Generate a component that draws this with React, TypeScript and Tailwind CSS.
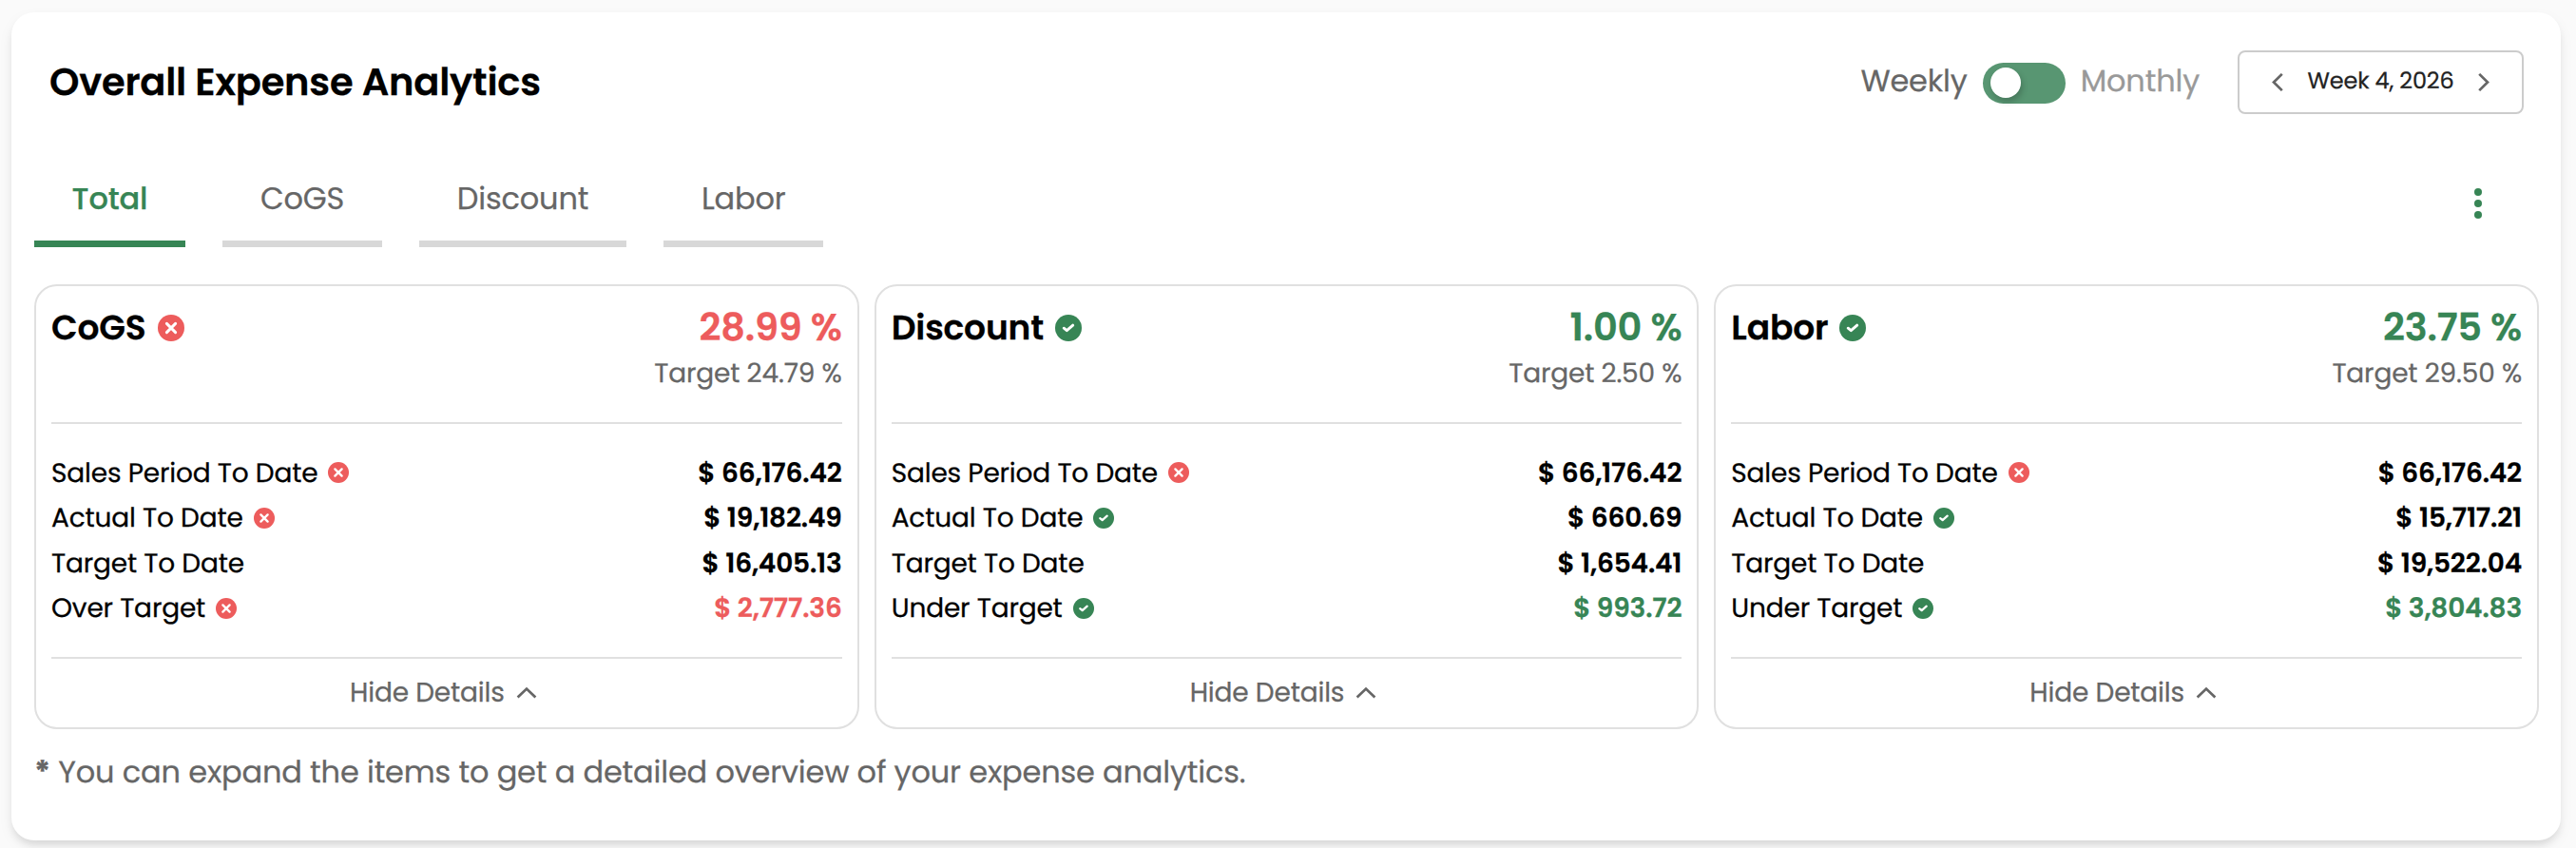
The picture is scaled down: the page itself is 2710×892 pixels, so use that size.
type Status = "good" | "bad";

type Row = { label: string; value: string; status?: Status; highlight?: boolean };

type Expense = {
  name: string;
  status: Status;
  percent: string;
  target: string;
  rows: Row[];
};

const tabs = ["Total", "CoGS", "Discount", "Labor"];

const expenses: Expense[] = [
  {
    name: "CoGS",
    status: "bad",
    percent: "28.99 %",
    target: "Target 24.79 %",
    rows: [
      { label: "Sales Period To Date", value: "$ 66,176.42", status: "bad" },
      { label: "Actual To Date", value: "$ 19,182.49", status: "bad" },
      { label: "Target To Date", value: "$ 16,405.13" },
      { label: "Over Target", value: "$ 2,777.36", status: "bad", highlight: true },
    ],
  },
  {
    name: "Discount",
    status: "good",
    percent: "1.00 %",
    target: "Target 2.50 %",
    rows: [
      { label: "Sales Period To Date", value: "$ 66,176.42", status: "bad" },
      { label: "Actual To Date", value: "$ 660.69", status: "good" },
      { label: "Target To Date", value: "$ 1,654.41" },
      { label: "Under Target", value: "$ 993.72", status: "good", highlight: true },
    ],
  },
  {
    name: "Labor",
    status: "good",
    percent: "23.75 %",
    target: "Target 29.50 %",
    rows: [
      { label: "Sales Period To Date", value: "$ 66,176.42", status: "bad" },
      { label: "Actual To Date", value: "$ 15,717.21", status: "good" },
      { label: "Target To Date", value: "$ 19,522.04" },
      { label: "Under Target", value: "$ 3,804.83", status: "good", highlight: true },
    ],
  },
];

const textColor: Record<Status, string> = {
  good: "text-[#378555]",
  bad: "text-[#ed5c5c]",
};

function StatusIcon({ status, className }: { status: Status; className: string }) {
  return (
    <svg viewBox="0 0 28 28" fill="none" className={`shrink-0 ${textColor[status]} ${className}`}>
      <circle cx="14" cy="14" r="14" fill="currentColor" />
      {status === "good" ? (
        <path d="M9.2 14.2 12.3 16.7 18.7 11.1" stroke="#fff" strokeWidth="2.9" strokeLinecap="round" strokeLinejoin="round" />
      ) : (
        <path d="M9.4 9.4 18.6 18.6M18.6 9.4 9.4 18.6" stroke="#fff" strokeWidth="3" strokeLinecap="round" />
      )}
    </svg>
  );
}

function Chevron({ d, viewBox, className }: { d: string; viewBox: string; className: string }) {
  return (
    <svg viewBox={viewBox} fill="none" className={`shrink-0 ${className}`}>
      <path d={d} stroke="#666" strokeWidth="2.7" />
    </svg>
  );
}

function ExpenseCard({ expense }: { expense: Expense }) {
  return (
    <section className="flex h-[468px] flex-col rounded-[24px] border-2 border-[#e0e0e0] px-4">
      <div className="flex h-[143px] items-start justify-between pt-[13px]">
        <h2 className="flex items-center gap-3 text-[36px] leading-[62px] font-semibold">
          {expense.name}
          <StatusIcon status={expense.status} className="size-7" />
        </h2>
        <div className="text-right">
          <p className={`text-[40px] leading-[60px] font-semibold tracking-[-0.25px] ${textColor[expense.status]}`}>{expense.percent}</p>
          <p className="text-[28px] leading-[38px] text-[#666]">{expense.target}</p>
        </div>
      </div>
      <div className="h-[249px] border-y-2 border-[#e0e0e0] pt-[28px]">
        {expense.rows.map((row) => (
          <div key={row.label} className="flex h-[47.5px] items-center justify-between text-[28px] leading-[42px]">
            <span className="flex items-center gap-[11px]">
              {row.label}
              {row.status && <StatusIcon status={row.status} className="mb-px size-[22px]" />}
            </span>
            <span className={`font-semibold ${row.highlight && row.status ? textColor[row.status] : ""}`}>{row.value}</span>
          </div>
        ))}
      </div>
      <button className="flex flex-1 items-center justify-center gap-[5px] text-[28px] leading-[42px] text-[#666]">
        Hide Details
        <Chevron viewBox="0 0 36 36" d="M8.6 22.6 18 13.6 27.4 22.6" className="size-9" />
      </button>
    </section>
  );
}

export default function App() {
  return (
    <div className="h-[892px] overflow-hidden bg-[#fafafa] pt-[13px] pr-4 pl-3 font-['Poppins','Inter',sans-serif] tracking-[-0.17px] text-black [-webkit-text-stroke-width:0.25px] [text-rendering:geometricPrecision]">
      <main className="h-[871px] rounded-[24px] bg-white pt-10 pr-[23px] pl-6 shadow-[0_6px_8px_-2px_rgba(0,0,0,0.11),0_6px_16px_0_rgba(0,0,0,0.05)]">
        <header className="flex h-[67px] items-center justify-between pr-4 pl-4">
          <h1 className="-mt-[2px] text-[40px] leading-[60px] font-semibold tracking-[-0.22px]">Overall Expense Analytics</h1>
          <div className="flex items-center text-[32px] leading-[48px]">
            <span className="-mt-[2px] text-[#666]">Weekly</span>
            <button className="mx-4 mt-[2px] flex h-[43px] w-[87px] items-center rounded-full bg-[#589672] pb-px pl-2">
              <span className="size-8 rounded-full bg-white shadow-[2px_4px_6px_rgba(0,0,0,0.2)]" />
            </button>
            <span className="-mt-[2px] text-[#999]">Monthly</span>
            <div className="ml-10 flex h-[67px] w-[301px] items-center justify-between rounded-lg border-2 border-[#ccc] px-[34px]">
              <Chevron viewBox="0 0 12 19" d="M10.8 .9 2 9.5 10.8 18.1" className="h-[19px] w-3" />
              <span className="-mt-px text-[24px] leading-9 text-[#222]">Week 4, 2026</span>
              <Chevron viewBox="0 0 12 19" d="M1.2 .9 10 9.5 1.2 18.1" className="h-[19px] w-3" />
            </div>
          </div>
        </header>
        <div className="mt-[65px] flex h-[75px] justify-between pr-[60px]">
          <nav className="flex gap-[39.5px]">
            {tabs.map((tab, i) => (
              <button
                key={tab}
                className={
                  i === 0
                    ? "border-b-[7px] border-[#378555] px-[39.6px] pb-5 text-[32px] leading-[48px] font-medium text-[#378555]"
                    : "border-b-[7px] border-[#d8d8d8] px-[39.6px] pb-5 text-[32px] leading-[48px] text-[#666]"
                }
              >
                {tab}
              </button>
            ))}
          </nav>
          <svg viewBox="0 0 8 32" className="mt-[13px] h-8 w-2 fill-[#378555]">
            <circle cx="4" cy="4" r="4" />
            <circle cx="4" cy="16" r="4" />
            <circle cx="4" cy="28" r="4" />
          </svg>
        </div>
        <div className="mt-[39px] grid grid-cols-3 gap-4">
          {expenses.map((expense) => (
            <ExpenseCard key={expense.name} expense={expense} />
          ))}
        </div>
        <p className="mt-[22px] text-[32px] leading-[48px] text-[#666]">
          <span className="font-bold">*</span> You can expand the items to get a detailed overview of your expense analytics.
        </p>
      </main>
    </div>
  );
}
